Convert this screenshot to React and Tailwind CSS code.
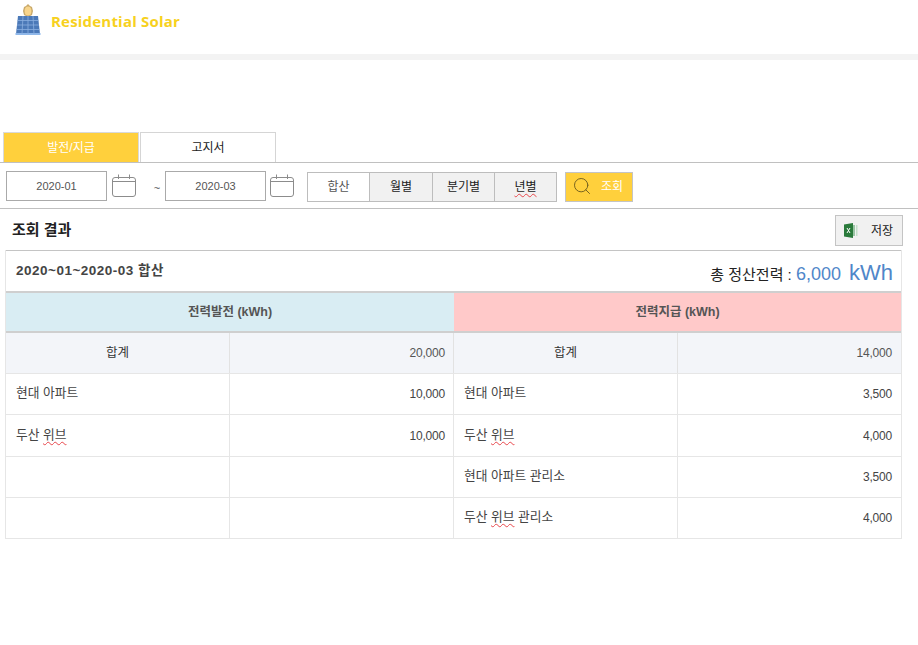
import { Search } from 'lucide-react';

const KR = "font-['Liberation_Sans','Noto_Sans_CJK_KR',sans-serif]";

const Squiggle = ({ children }) => (
  <span className="underline decoration-wavy decoration-[#e8474c] decoration-1 underline-offset-2">{children}</span>
);

const Logo = () => (
  <svg width="26" height="31" viewBox="0 0 26 31" className="shrink-0">
    <path d="M13 0 L15 2 L17 3 L18 7 L17 11 L15 12 L13 14 L11 12 L9 11 L8 7 L9 3 L11 2 Z" fill="#c9a96a" />
    <ellipse cx="13" cy="7" rx="3.4" ry="4.6" fill="#f8d58c" />
    <path d="M3 12 H23 L25 30 H1 Z" fill="#4b79b8" />
    <path d="M0.5 29 H25.5 V31 H0.5 Z" fill="#8fb8ea" />
    <path d="M8 12 L7 30 M13 12 V30 M18 12 L19 30 M2.6 16.5 H23.4 M2 21 H24 M1.5 25.5 H24.5" stroke="#8aaee0" strokeWidth="0.8" />
  </svg>
);

const CalendarIcon = () => (
  <svg width="24" height="24" viewBox="0 0 24 24" fill="none" stroke="#8c8c8c" strokeWidth="1">
    <rect x="0.5" y="3.5" width="23" height="19" rx="2.5" />
    <path d="M1 7.5 H23" />
    <path d="M6.5 0.5 V5 M17.5 0.5 V5" />
  </svg>
);

const ExcelIcon = () => (
  <svg width="16" height="15" viewBox="0 0 16 15">
    <path d="M0 1.5 L9 0 V15 L0 13.5 Z" fill="#2a7a3b" />
    <path d="M9 2 H11 V13 H9 Z" fill="#9ac5a4" />
    <path d="M12 2 H13.5 V13 H12 Z" fill="#c4dfca" />
    <path d="M3 5 L6 10 M6 5 L3 10" stroke="#fff" strokeWidth="1" />
  </svg>
);

const DateField = ({ value, gap }) => (
  <div className={`flex items-center ${gap}`}>
    <div className="w-[101px] h-[30px] border border-[#aaaaaa] flex items-center justify-center text-[11px] text-[#555]">{value}</div>
    <CalendarIcon />
  </div>
);

const periods = [
  { label: '합산', active: true, width: 'w-[61px]' },
  { label: '월별', width: 'w-[63px]' },
  { label: '분기별', width: 'w-[62px]' },
  { label: <Squiggle>년별</Squiggle>, width: 'w-[62px]' },
];

const rows = [
  { cells: ['현대 아파트', '10,000', '현대 아파트', '3,500'], height: 'h-[41px] border-b' },
  { cells: [<>두산 <Squiggle>위브</Squiggle></>, '10,000', <>두산 <Squiggle>위브</Squiggle></>, '4,000'], height: 'h-[42px] border-b' },
  { cells: ['', '', '현대 아파트 관리소', '3,500'], height: 'h-[41px] border-b' },
  { cells: ['', '', <>두산 <Squiggle>위브</Squiggle> 관리소</>, '4,000'], height: 'h-[40px]' },
];

const App = () => {
  return (
    <div className={`${KR} w-[918px] h-[645px] bg-white text-[#333] overflow-hidden`}>
      <header className="h-[54px] pl-[15px] pt-[4px] flex items-start gap-[10px]">
        <Logo />
        <span className="text-[15px] font-bold text-[#f7d11e] mt-[6px] font-['Open_Sans',sans-serif] tracking-[0.2px]">Residential Solar</span>
      </header>
      <div className="h-[6px] bg-[#f3f3f3]" />

      <div className="mt-[72px] pl-[3px] h-[31px] flex items-end gap-[1px] border-b border-[#c0c0c0]">
        <div className="w-[136px] h-[30px] bg-[#ffd03c] border border-[#d9d9d9] border-b-0 flex items-center justify-center text-[12px] text-white">발전/지급</div>
        <div className="w-[136px] h-[30px] bg-white border border-[#d5d5d5] border-b-0 flex items-center justify-center text-[12px] text-[#222]">고지서</div>
      </div>

      <div className="h-[46px] pl-[6px] pt-[8px] flex items-start border-b border-[#c0c0c0]">
        <DateField value="2020-01" gap="gap-[5px]" />
        <span className="w-[29px] h-[30px] pl-[13px] pt-[4px] flex items-center justify-center text-[11px] text-[#555]">~</span>
        <DateField value="2020-03" gap="gap-[4px]" />
        <div className="ml-[13px] mt-[1px] flex border border-[#bdbdbd] h-[30px]">
          {periods.map((p, i) => (
            <div
              key={i}
              className={`${p.width} ${i > 0 ? 'border-l border-[#bdbdbd]' : ''} ${p.active ? 'bg-white text-[#555]' : 'bg-[#f1f1f1] text-[#222]'} flex items-center justify-center text-[12px]`}
            >
              {p.label}
            </div>
          ))}
        </div>
        <div className="ml-[8px] mt-[1px] w-[68px] h-[30px] bg-[#ffd03c] border border-[#c4c4c4] flex items-center pl-[6px] gap-[9px] text-[12px] text-white">
          <Search size={20} strokeWidth={1.1} color="#6b5a1e" className="-mt-[2px]" />
          <span>조회</span>
        </div>
      </div>

      <div className="h-[41px] pl-[12px] pr-[15px] flex items-center justify-between">
        <span className="text-[15px] font-semibold text-[#222] mt-[2px]">조회 결과</span>
        <div className="w-[68px] h-[31px] bg-[#f1f1f1] border border-[#c4c4c4] flex items-center pl-[8px] gap-[11px] text-[12px] text-[#222] mt-[2px]">
          <ExcelIcon />
          <span>저장</span>
        </div>
      </div>

      <div className="mx-[5px] w-[897px] border-x border-b border-[#e6e6e6]">
        <div className="h-[41px] border-t border-[#c4c4c4] pl-[10px] pr-[8px] flex items-center justify-between">
          <span className="text-[13.5px] font-semibold text-[#444] tracking-[0.5px]">2020~01~2020-03 합산</span>
          <span className="text-[15px] text-[#222] flex items-baseline mt-[3px]">
            총 정산전력 :&nbsp;
            <span className="text-[18px] text-[#4f86c9]">6,000</span>
            <span className="text-[22px] text-[#4f86c9] ml-[8px]">kWh</span>
          </span>
        </div>
        <div className="grid grid-cols-[448px_1fr] h-[42px] border-y-2 border-[#cfcfcf] text-[12.5px] font-semibold text-[#555]">
          <div className="bg-[#d9edf3] flex items-center justify-center">전력발전 (kWh)</div>
          <div className="bg-[#ffc9c9] flex items-center justify-center">전력지급 (kWh)</div>
        </div>
        <div className="grid grid-cols-[224px_224px_224px_1fr] h-[41px] bg-[#f3f5f9] border-b border-[#e6e6e6] text-[12.5px] text-[#333]">
          <div className="flex items-center justify-center border-r border-[#e2e2e2]">합계</div>
          <div className="flex items-center justify-end pr-[8px] border-r border-[#e2e2e2] text-[12px] tracking-[-0.2px] text-[#555]">20,000</div>
          <div className="flex items-center justify-center border-r border-[#e2e2e2]">합계</div>
          <div className="flex items-center justify-end pr-[9px] text-[12px] tracking-[-0.2px] text-[#555]">14,000</div>
        </div>
        {rows.map((row, i) => (
          <div key={i} className={`grid grid-cols-[224px_224px_224px_1fr] ${row.height} border-[#e6e6e6] text-[12.75px] text-[#444]`}>
            <div className="flex items-center pl-[10px] pb-[2px] border-r border-[#e6e6e6]"><span>{row.cells[0]}</span></div>
            <div className="flex items-center justify-end pr-[8px] border-r border-[#e6e6e6] text-[12px] tracking-[-0.2px]">{row.cells[1]}</div>
            <div className="flex items-center pl-[10px] pb-[2px] border-r border-[#e6e6e6]"><span>{row.cells[2]}</span></div>
            <div className="flex items-center justify-end pr-[9px] text-[12px] tracking-[-0.2px]">{row.cells[3]}</div>
          </div>
        ))}
      </div>
    </div>
  );
};

export default App;
